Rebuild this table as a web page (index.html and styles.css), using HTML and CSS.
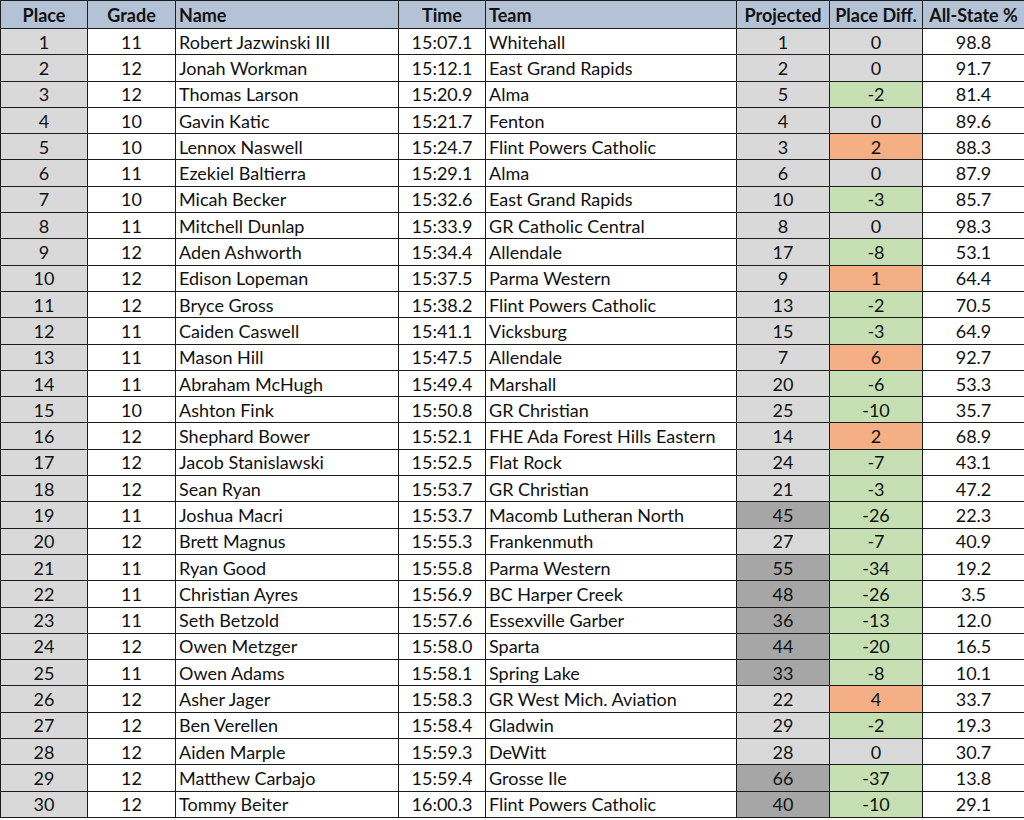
FILE: index.html
```html
<!DOCTYPE html>
<html>
<head>
<meta charset="utf-8">
<link rel="stylesheet" href="styles.css">
</head>
<body>
<table class="results">
<colgroup>
<col class="c-place"><col class="c-grade"><col class="c-name"><col class="c-time"><col class="c-team"><col class="c-proj"><col class="c-diff"><col class="c-pct">
</colgroup>
<thead>
<tr><th>Place</th><th>Grade</th><th class="left">Name</th><th>Time</th><th class="left">Team</th><th>Projected</th><th>Place Diff.</th><th>All-State %</th></tr>
</thead>
<tbody>
<tr><td class="place">1</td><td>11</td><td class="left">Robert Jazwinski III</td><td>15:07.1</td><td class="left">Whitehall</td><td class="proj">1</td><td class="zero">0</td><td>98.8</td></tr>
<tr><td class="place">2</td><td>12</td><td class="left">Jonah Workman</td><td>15:12.1</td><td class="left">East Grand Rapids</td><td class="proj">2</td><td class="zero">0</td><td>91.7</td></tr>
<tr><td class="place">3</td><td>12</td><td class="left">Thomas Larson</td><td>15:20.9</td><td class="left">Alma</td><td class="proj">5</td><td class="neg">-2</td><td>81.4</td></tr>
<tr><td class="place">4</td><td>10</td><td class="left">Gavin Katic</td><td>15:21.7</td><td class="left">Fenton</td><td class="proj">4</td><td class="zero">0</td><td>89.6</td></tr>
<tr><td class="place">5</td><td>10</td><td class="left">Lennox Naswell</td><td>15:24.7</td><td class="left">Flint Powers Catholic</td><td class="proj">3</td><td class="pos">2</td><td>88.3</td></tr>
<tr><td class="place">6</td><td>11</td><td class="left">Ezekiel Baltierra</td><td>15:29.1</td><td class="left">Alma</td><td class="proj">6</td><td class="zero">0</td><td>87.9</td></tr>
<tr><td class="place">7</td><td>10</td><td class="left">Micah Becker</td><td>15:32.6</td><td class="left">East Grand Rapids</td><td class="proj">10</td><td class="neg">-3</td><td>85.7</td></tr>
<tr><td class="place">8</td><td>11</td><td class="left">Mitchell Dunlap</td><td>15:33.9</td><td class="left">GR Catholic Central</td><td class="proj">8</td><td class="zero">0</td><td>98.3</td></tr>
<tr><td class="place">9</td><td>12</td><td class="left">Aden Ashworth</td><td>15:34.4</td><td class="left">Allendale</td><td class="proj">17</td><td class="neg">-8</td><td>53.1</td></tr>
<tr><td class="place">10</td><td>12</td><td class="left">Edison Lopeman</td><td>15:37.5</td><td class="left">Parma Western</td><td class="proj">9</td><td class="pos">1</td><td>64.4</td></tr>
<tr><td class="place">11</td><td>12</td><td class="left">Bryce Gross</td><td>15:38.2</td><td class="left">Flint Powers Catholic</td><td class="proj">13</td><td class="neg">-2</td><td>70.5</td></tr>
<tr><td class="place">12</td><td>11</td><td class="left">Caiden Caswell</td><td>15:41.1</td><td class="left">Vicksburg</td><td class="proj">15</td><td class="neg">-3</td><td>64.9</td></tr>
<tr><td class="place">13</td><td>11</td><td class="left">Mason Hill</td><td>15:47.5</td><td class="left">Allendale</td><td class="proj">7</td><td class="pos">6</td><td>92.7</td></tr>
<tr><td class="place">14</td><td>11</td><td class="left">Abraham McHugh</td><td>15:49.4</td><td class="left">Marshall</td><td class="proj">20</td><td class="neg">-6</td><td>53.3</td></tr>
<tr><td class="place">15</td><td>10</td><td class="left">Ashton Fink</td><td>15:50.8</td><td class="left">GR Christian</td><td class="proj">25</td><td class="neg">-10</td><td>35.7</td></tr>
<tr><td class="place">16</td><td>12</td><td class="left">Shephard Bower</td><td>15:52.1</td><td class="left">FHE Ada Forest Hills Eastern</td><td class="proj">14</td><td class="pos">2</td><td>68.9</td></tr>
<tr><td class="place">17</td><td>12</td><td class="left">Jacob Stanislawski</td><td>15:52.5</td><td class="left">Flat Rock</td><td class="proj">24</td><td class="neg">-7</td><td>43.1</td></tr>
<tr><td class="place">18</td><td>12</td><td class="left">Sean Ryan</td><td>15:53.7</td><td class="left">GR Christian</td><td class="proj">21</td><td class="neg">-3</td><td>47.2</td></tr>
<tr><td class="place">19</td><td>11</td><td class="left">Joshua Macri</td><td>15:53.7</td><td class="left">Macomb Lutheran North</td><td class="proj dark">45</td><td class="neg">-26</td><td>22.3</td></tr>
<tr><td class="place">20</td><td>12</td><td class="left">Brett Magnus</td><td>15:55.3</td><td class="left">Frankenmuth</td><td class="proj">27</td><td class="neg">-7</td><td>40.9</td></tr>
<tr><td class="place">21</td><td>11</td><td class="left">Ryan Good</td><td>15:55.8</td><td class="left">Parma Western</td><td class="proj dark">55</td><td class="neg">-34</td><td>19.2</td></tr>
<tr><td class="place">22</td><td>11</td><td class="left">Christian Ayres</td><td>15:56.9</td><td class="left">BC Harper Creek</td><td class="proj dark">48</td><td class="neg">-26</td><td>3.5</td></tr>
<tr><td class="place">23</td><td>11</td><td class="left">Seth Betzold</td><td>15:57.6</td><td class="left">Essexville Garber</td><td class="proj dark">36</td><td class="neg">-13</td><td>12.0</td></tr>
<tr><td class="place">24</td><td>12</td><td class="left">Owen Metzger</td><td>15:58.0</td><td class="left">Sparta</td><td class="proj dark">44</td><td class="neg">-20</td><td>16.5</td></tr>
<tr><td class="place">25</td><td>11</td><td class="left">Owen Adams</td><td>15:58.1</td><td class="left">Spring Lake</td><td class="proj dark">33</td><td class="neg">-8</td><td>10.1</td></tr>
<tr><td class="place">26</td><td>12</td><td class="left">Asher Jager</td><td>15:58.3</td><td class="left">GR West Mich. Aviation</td><td class="proj">22</td><td class="pos">4</td><td>33.7</td></tr>
<tr><td class="place">27</td><td>12</td><td class="left">Ben Verellen</td><td>15:58.4</td><td class="left">Gladwin</td><td class="proj">29</td><td class="neg">-2</td><td>19.3</td></tr>
<tr><td class="place">28</td><td>12</td><td class="left">Aiden Marple</td><td>15:59.3</td><td class="left">DeWitt</td><td class="proj">28</td><td class="zero">0</td><td>30.7</td></tr>
<tr><td class="place">29</td><td>12</td><td class="left">Matthew Carbajo</td><td>15:59.4</td><td class="left">Grosse Ile</td><td class="proj dark">66</td><td class="neg">-37</td><td>13.8</td></tr>
<tr><td class="place">30</td><td>12</td><td class="left">Tommy Beiter</td><td>16:00.3</td><td class="left">Flint Powers Catholic</td><td class="proj dark">40</td><td class="neg">-10</td><td>29.1</td></tr>
</tbody>
</table>
</body>
</html>
```
FILE: styles.css
```css
html, body {
  margin: 0;
  padding: 0;
  background: #ffffff;
}
.results {
  border-collapse: collapse;
  table-layout: fixed;
  width: 1024px;
  font-family: "Lato", "Open Sans", sans-serif;
  font-size: 18px;
  color: #111111;
}
.c-place { width: 87px; }
.c-grade { width: 88px; }
.c-name { width: 223px; }
.c-time { width: 87px; }
.c-team { width: 251px; }
.c-proj { width: 93px; }
.c-diff { width: 93px; }
.c-pct { width: 102px; }
.results th,
.results td {
  border: 1px solid #1c1c1c;
  padding: 0 4px;
  text-align: center;
  white-space: nowrap;
  overflow: hidden;
  line-height: 1;
}
.results th {
  background: #b4c2d6;
  font-weight: 700;
  height: 27px;
}
.results td {
  height: 25.3px;
}
.results .left {
  text-align: left;
  padding-left: 3px;
}
.place { background: #d9d9d9; }
.proj { background: #d9d9d9; }
.proj.dark { background: #a6a6a6; }
.zero { background: #d9d9d9; }
.neg { background: #c6e0b4; }
.pos { background: #f4b084; }
```
